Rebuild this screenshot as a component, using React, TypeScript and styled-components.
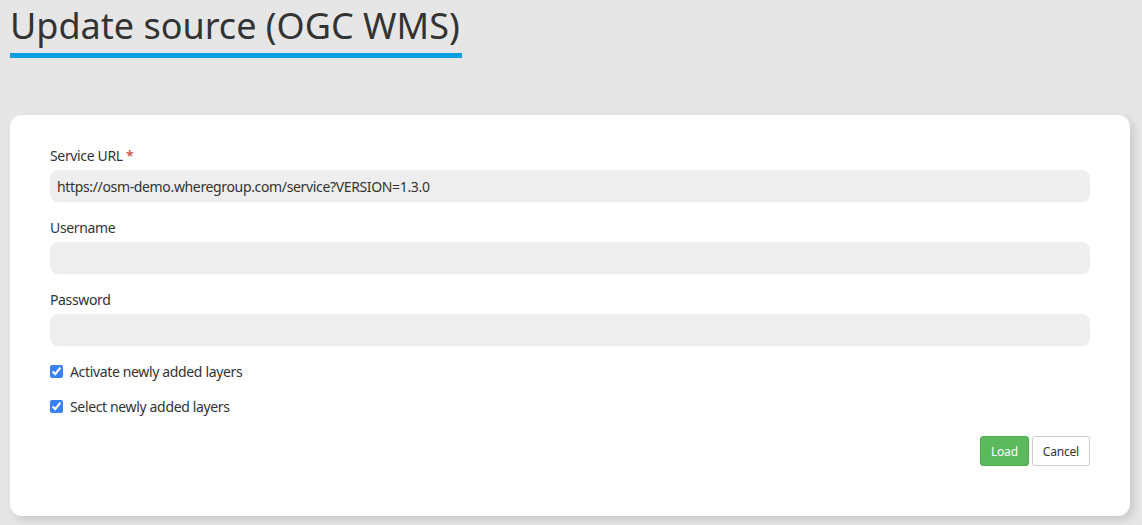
import React from "react";
import styled, { createGlobalStyle } from "styled-components";

const Global = createGlobalStyle`
  html, body { margin: 0; padding: 0; background: #e6e6e6; }
  body { font-family: "Noto Sans", "Open Sans", sans-serif; color: #333; }
  * { box-sizing: border-box; }
`;

const Page = styled.div`
  width: 1142px;
  height: 525px;
  padding: 0 12px 0 10px;
  overflow: hidden;
`;

const Title = styled.h1`
  display: inline-block;
  margin: 0;
  padding-top: 2px;
  font-size: 36px;
  font-weight: 400;
  line-height: 48px;
  color: #333;
  border-bottom: 5px solid #0b9fe1;
  padding-bottom: 3px;
  width: 452px;
  white-space: nowrap;
`;

const Card = styled.div`
  margin-top: 57px;
  background: #fff;
  border-radius: 12px;
  box-shadow: 4px 4px 8px rgba(0, 0, 0, 0.12);
  padding: 31px 40px 50px;
  height: 401px;
  width: 1120px;
  letter-spacing: -0.35px;
`;

const Field = styled.div`
  display: flex;
  flex-direction: column;
  gap: 5px;
  margin-bottom: 16px;
`;

const Label = styled.label`
  font-size: 14px;
  line-height: 19px;
  color: #333;
`;

const Req = styled.span`
  color: #c0392b;
`;

const Input = styled.input`
  height: 32px;
  width: 100%;
  border: none;
  background: #eee;
  border-radius: 8px;
  padding: 0 7px;
  font-family: inherit;
  font-size: 14px;
  letter-spacing: -0.35px;
  color: #333;
  outline: none;
`;

const CheckRow = styled.label<{ $mt: number }>`
  display: flex;
  align-items: center;
  gap: 7px;
  font-size: 14px;
  color: #333;
  height: 19px;
  margin-top: ${(p) => p.$mt}px;
`;

const Box = styled.input`
  margin: 0;
  width: 13px;
  height: 13px;
  accent-color: #3b82f6;
`;

const Actions = styled.div`
  display: flex;
  justify-content: flex-end;
  gap: 3px;
  margin-top: 20px;
`;

const Btn = styled.button<{ $primary?: boolean }>`
  height: 30px;
  padding: 0 10px;
  font-family: inherit;
  font-size: 12px;
  letter-spacing: -0.2px;
  border-radius: 3px;
  cursor: pointer;
  border: 1px solid ${(p) => (p.$primary ? "#4cae4c" : "#ccc")};
  background: ${(p) => (p.$primary ? "#5cb85c" : "#fff")};
  color: ${(p) => (p.$primary ? "#fff" : "#333")};
`;

export default function App() {
  return (
    <>
      <Global />
      <Page>
        <Title>Update source (OGC WMS)</Title>
        <Card>
          <Field>
            <Label>
              Service URL <Req>*</Req>
            </Label>
            <Input defaultValue="https://osm-demo.wheregroup.com/service?VERSION=1.3.0" />
          </Field>
          <Field>
            <Label>Username</Label>
            <Input />
          </Field>
          <Field>
            <Label>Password</Label>
            <Input type="password" />
          </Field>
          <CheckRow $mt={9}>
            <Box type="checkbox" defaultChecked />
            Activate newly added layers
          </CheckRow>
          <CheckRow $mt={16}>
            <Box type="checkbox" defaultChecked />
            Select newly added layers
          </CheckRow>
          <Actions>
            <Btn $primary>Load</Btn>
            <Btn>Cancel</Btn>
          </Actions>
        </Card>
      </Page>
    </>
  );
}
